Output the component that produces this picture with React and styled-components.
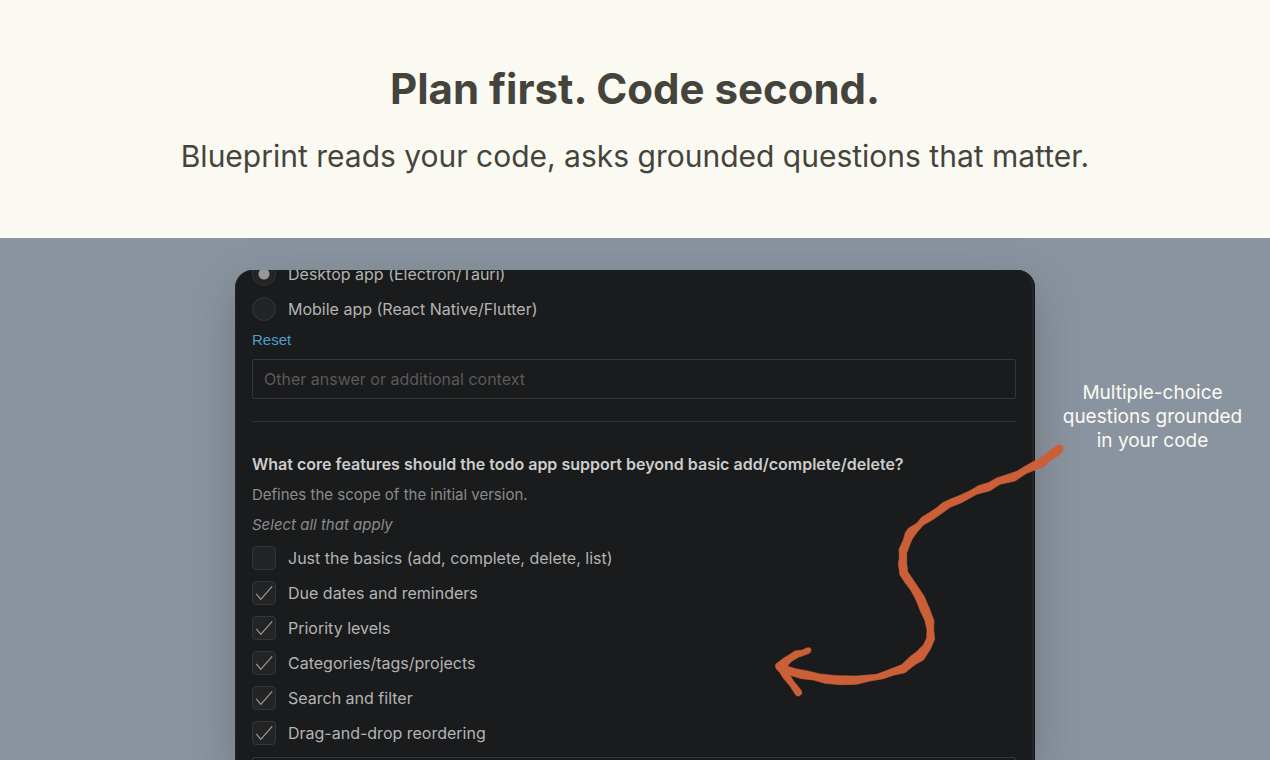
import React, { useState } from "react";
import styled, { createGlobalStyle, css } from "styled-components";

const GlobalStyle = createGlobalStyle`
  *, *::before, *::after { box-sizing: border-box; }
  body {
    margin: 0;
    background: #8a94a0;
    font-family: Inter, "Liberation Sans", sans-serif;
  }
`;

const Page = styled.main`
  display: flex;
  flex-direction: column;
  height: 100vh;
  overflow: hidden;
`;

const Hero = styled.header`
  flex: none;
  display: flex;
  flex-direction: column;
  align-items: center;
  gap: 16px;
  padding: 60px 24px;
  background: #fbfaf2;
  color: #45443c;
  text-align: center;
`;

const Headline = styled.h1`
  margin: 0;
  font-size: 42px;
  line-height: 58px;
  font-weight: 700;
`;

const Tagline = styled.p`
  margin: 0;
  font-size: 30px;
  line-height: 44px;
  font-weight: 400;
`;

const Stage = styled.section`
  flex: 1;
  min-height: 0;
  overflow: hidden;
  display: grid;
  grid-template-columns: 1fr minmax(0, 800px) 1fr;
  padding-top: 32px;
  background: #8a94a0;
`;

const Panel = styled.form`
  grid-column: 2;
  min-height: 0;
  overflow: hidden;
  padding: 0 19px 0 17px;
  border-radius: 18px 18px 0 0;
  background: #1a1b1c;
  box-shadow: inset -1px 0 #151617, inset -3px 0 #242526, inset 1px 0 #242526,
    0 16px 48px rgba(60, 60, 60, 0.32);
`;

const Question = styled.fieldset`
  margin: 0;
  padding: 0;
  border: 0;
  min-width: 0;
`;

const ScrolledQuestion = styled(Question)`
  margin-top: -8px;
`;

const Options = styled.div`
  display: flex;
  flex-direction: column;
  gap: 11px;
`;

const Option = styled.label`
  display: flex;
  align-items: center;
  gap: 12px;
  color: #b4b4b3;
  font-size: 16px;
  line-height: 24px;
`;

const control = css`
  appearance: none;
  flex: none;
  width: 24px;
  height: 24px;
  margin: 0;
  border: 1px solid #343536;
  background: #232425;
`;

const Radio = styled.input.attrs({ type: "radio" })`
  ${control}
  border-radius: 50%;
  &:checked {
    background: radial-gradient(circle, #979797 5px, #232425 6px);
  }
`;

const Checkbox = styled.input.attrs({ type: "checkbox" })`
  ${control}
  display: block;
  border-radius: 4px;
`;

const CheckSlot = styled.span`
  display: grid;
  > * {
    grid-area: 1 / 1;
  }
  svg {
    pointer-events: none;
  }
`;

const ResetButton = styled.button`
  display: block;
  margin: 9px 0;
  padding: 0;
  border: 0;
  background: none;
  color: #4c9fca;
  font-family: "Liberation Sans", Arial, sans-serif;
  font-size: 15px;
  line-height: 20px;
`;

const TextBox = styled.input`
  display: block;
  width: 100%;
  height: 40px;
  padding: 0 11px;
  border: 1px solid #353637;
  border-radius: 2px;
  background: transparent;
  color: #b1b1b0;
  font-family: inherit;
  font-size: 16px;
  &::placeholder {
    color: #5a5a5a;
    opacity: 1;
  }
`;

const Divider = styled.hr`
  height: 1px;
  margin: 22px 0 30px;
  border: 0;
  background: #303132;
`;

const Title = styled.legend`
  padding: 0;
  color: #cdcdcc;
  font-size: 16px;
  line-height: 24px;
  font-weight: 600;
`;

const Note = styled.p`
  margin: 8px 0;
  color: #8b8b8a;
  font-size: 15px;
  line-height: 22px;
  font-style: ${(p) => (p.$hint ? "italic" : "normal")};
`;

const Answers = styled.div`
  display: flex;
  flex-direction: column;
  gap: 12px;
  padding-top: 2px;
`;

const Annotation = styled.aside`
  position: relative;
  padding: 111px 24px 0;
  color: #fbfaf2;
  font-size: 19px;
  line-height: 24px;
  text-align: center;
`;

const Arrow = styled.svg`
  position: absolute;
  top: 160px;
  left: -275px;
  width: 320px;
  height: 280px;
  pointer-events: none;
`;

const FEATURES = [
  ["Just the basics (add, complete, delete, list)", false],
  ["Due dates and reminders", true],
  ["Priority levels", true],
  ["Categories/tags/projects", true],
  ["Search and filter", true],
  ["Drag-and-drop reordering", true],
];

function CheckOption({ label, initial }) {
  const [on, setOn] = useState(initial);
  return (
    <Option>
      <CheckSlot>
        <Checkbox checked={on} onChange={() => setOn(!on)} />
        {on && (
          <svg width="24" height="24" viewBox="0 0 24 24" fill="none" aria-hidden="true">
            <path d="M4.3 12.8 8.8 18.4 20.2 5.3" stroke="#9b9b9b" strokeWidth="1.2" />
          </svg>
        )}
      </CheckSlot>
      {label}
    </Option>
  );
}

function HandDrawnArrow() {
  return (
    <Arrow viewBox="0 0 960 840" aria-hidden="true">
      <path
        fill="#cb6038"
        stroke="#cb6038"
        strokeWidth="2"
        strokeLinejoin="round"
        d="M903 45Q896 43 888 48L865 65 850 78 825 92 800 106 770 124 740 134 710 144 685 158 655 167 630 182 600 196 570 208 548 218 530 233 505 250 485 262 470 280 445 295 436 308 430 330 417 358 418 385 415 400 420 435 435 458 452 480 468 510 482 545 495 572 501 600 500 625 490 645 470 665 450 680 425 704 390 718 350 733 290 738 230 737 180 732 140 722 105 716 82 708 95 694 115 682 148 670Q158 660 149 653L140 654 127 660 105 663 88 674 70 685 48 702Q43 710 51 719L60 728 70 745 90 768 108 796Q114 801 121 796 129 790 124 782L115 770 100 752 90 736 125 746 160 750 195 760 240 764 290 763 330 753 370 746 400 736 435 728 465 704 490 690 510 660 524 628 521 600 522 572 508 535 492 498 478 477 460 450 443 425 440 400 440 370 455 330 470 308 490 285 520 268 550 247 570 232 605 218 650 193 690 182 720 163 765 153 800 130 825 120 850 112 870 92 898 76 908 63Q912 50 903 45Z"
      />
    </Arrow>
  );
}

export default function App() {
  const [platform, setPlatform] = useState("desktop");
  return (
    <>
      <GlobalStyle />
      <Page>
        <Hero>
          <Headline>Plan first. Code second.</Headline>
          <Tagline>Blueprint reads your code, asks grounded questions that matter.</Tagline>
        </Hero>
        <Stage>
          <Panel>
            <ScrolledQuestion>
              <Options>
                <Option>
                  <Radio
                    name="platform"
                    checked={platform === "desktop"}
                    onChange={() => setPlatform("desktop")}
                  />
                  Desktop app (Electron/Tauri)
                </Option>
                <Option>
                  <Radio
                    name="platform"
                    checked={platform === "mobile"}
                    onChange={() => setPlatform("mobile")}
                  />
                  Mobile app (React Native/Flutter)
                </Option>
              </Options>
              <ResetButton type="button" onClick={() => setPlatform("")}>
                Reset
              </ResetButton>
              <TextBox
                aria-label="Other answer or additional context"
                placeholder="Other answer or additional context"
              />
            </ScrolledQuestion>
            <Divider />
            <Question>
              <Title>What core features should the todo app support beyond basic add/complete/delete?</Title>
              <Note>Defines the scope of the initial version.</Note>
              <Note $hint>Select all that apply</Note>
              <Answers>
                <Options>
                  {FEATURES.map(([label, initial]) => (
                    <CheckOption key={label} label={label} initial={initial} />
                  ))}
                </Options>
                <TextBox aria-label="Other features" />
              </Answers>
            </Question>
          </Panel>
          <Annotation>
            Multiple-choice
            <br />
            questions grounded
            <br />
            in your code
            <HandDrawnArrow />
          </Annotation>
        </Stage>
      </Page>
    </>
  );
}
